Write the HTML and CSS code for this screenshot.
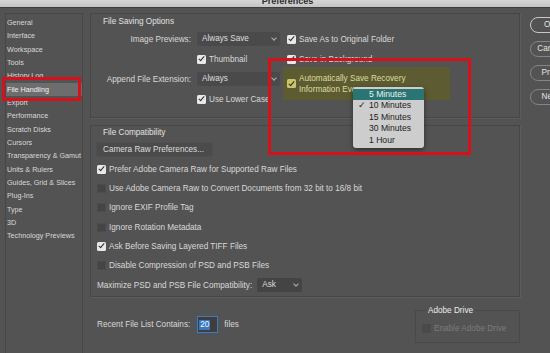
FILE: index.html
```html
<!DOCTYPE html>
<html lang="en">
<head>
    <meta charset="UTF-8">
    <title>Preferences</title>
    <link rel="stylesheet" href="styles.css">
</head>
<body>
<div class="titlebar"><span>Preferences</span></div>

<div class="window">
    <ul class="sidebar">
        <li>General</li>
        <li>Interface</li>
        <li>Workspace</li>
        <li>Tools</li>
        <li>History Log</li>
        <li class="active">File Handling</li>
        <li>Export</li>
        <li>Performance</li>
        <li>Scratch Disks</li>
        <li>Cursors</li>
        <li>Transparency &amp; Gamut</li>
        <li>Units &amp; Rulers</li>
        <li>Guides, Grid &amp; Slices</li>
        <li>Plug-Ins</li>
        <li>Type</li>
        <li>3D</li>
        <li>Technology Previews</li>
    </ul>

    <div class="content">
        <div class="group saving">
            <p class="group-title">File Saving Options</p>
            <div class="saving-grid">
                <span class="label">Image Previews:</span>
                <div class="select wide">Always Save<i class="chev"></i></div>
                <label class="check-row side"><span class="box on"></span>Save As to Original Folder</label>

                <span></span>
                <label class="check-row"><span class="box on"></span>Thumbnail</label>
                <label class="check-row side"><span class="box on"></span>Save in Background</label>

                <span class="label">Append File Extension:</span>
                <div class="select wide">Always<i class="chev"></i></div>
                <div class="olive">
                    <span class="box olive-box"></span>
                    <span>Automatically Save Recovery<br>Information Every:</span>
                </div>

                <span></span>
                <label class="check-row"><span class="box on"></span>Use Lower Case</label>
            </div>
        </div>

        <div class="group compat">
            <p class="group-title">File Compatibility</p>
            <div class="row"><span class="btn">Camera Raw Preferences...</span></div>
            <label class="row check-row"><span class="box on"></span>Prefer Adobe Camera Raw for Supported Raw Files</label>
            <label class="row check-row"><span class="box"></span>Use Adobe Camera Raw to Convert Documents from 32 bit to 16/8 bit</label>
            <label class="row check-row"><span class="box"></span>Ignore EXIF Profile Tag</label>
            <label class="row check-row"><span class="box"></span>Ignore Rotation Metadata</label>
            <label class="row check-row"><span class="box on"></span>Ask Before Saving Layered TIFF Files</label>
            <label class="row check-row"><span class="box"></span>Disable Compression of PSD and PSB Files</label>
            <div class="row">
                Maximize PSD and PSB File Compatibility:
                <div class="select small">Ask<i class="chev"></i></div>
            </div>
        </div>

        <div class="footer">
            <div class="recent">
                Recent File List Contains:
                <span class="num"><span class="sel">20</span></span>
                <span class="files">files</span>
            </div>
            <fieldset class="drive">
                <legend>Adobe Drive</legend>
                <span class="box dim"></span>Enable Adobe Drive
            </fieldset>
        </div>
    </div>

    <div class="buttons">
        <span class="pill default">OK</span>
        <span class="pill">Cancel</span>
        <span class="pill">Prev</span>
        <span class="pill">Next</span>
    </div>
</div>

<ul class="menu">
    <li class="hl">5 Minutes</li>
    <li class="ticked">10 Minutes</li>
    <li>15 Minutes</li>
    <li>30 Minutes</li>
    <li>1 Hour</li>
</ul>

<div class="mark mark-side"></div>
<div class="mark mark-main"></div>
</body>
</html>
```

FILE: styles.css
```css
html, body, ul, p {
    margin: 0;
    padding: 0;
}
body {
    width: 550px;
    height: 353px;
    overflow: hidden;
    position: relative;
    background: #535353;
    color: #d9d9d9;
    font-family: "Liberation Sans", Arial, sans-serif;
    font-size: 8.2px;
}
li {
    list-style: none;
}

.titlebar {
    height: 8px;
    overflow: hidden;
    background: linear-gradient(#d6d6d6, #c4c4c4);
    border-bottom: 1px solid #3c3c3c;
    box-sizing: border-box;
    text-align: center;
    padding-left: 25px;
    line-height: 3px;
    font-size: 9px;
    font-weight: bold;
    color: #2c2c2c;
}

.window {
    display: flex;
    height: 345px;
    padding-top: 5px;
    box-sizing: border-box;
}

/* left list */
.sidebar {
    margin-left: 5px;
    width: 78px;
    flex: none;
    border: 1px solid #474747;
    border-bottom: none;
    padding-top: 2px;
    box-sizing: border-box;
    font-size: 7.2px;
}
.sidebar li {
    height: 13.33px;
    line-height: 13.33px;
    padding-left: 1px;
    white-space: nowrap;
}
.sidebar .active {
    background: #6d6d6d;
    color: #f2f2f2;
}

.content {
    margin-left: 7px;
    width: 430px;
    flex: none;
}
.group {
    border: 1px solid #474747;
    box-shadow: 1px 1px 0 #5d5d5d;
    box-sizing: border-box;
}
.group-title {
    padding-left: 12px;
    color: #e2e2e2;
}
.saving {
    height: 105px;
}
.saving .group-title {
    line-height: 15px;
}
.saving-grid {
    display: grid;
    grid-template-columns: 106px 86px 1fr;
    grid-auto-rows: 20px;
    align-items: center;
}
.label {
    text-align: right;
    padding-right: 6px;
    white-space: nowrap;
}
.side {
    padding-left: 4px;
}

.select {
    position: relative;
    height: 14px;
    line-height: 14px;
    background: #4a4a4a;
    border-radius: 2px;
    padding-left: 5px;
    box-sizing: border-box;
    color: #dedede;
}
.select.wide {
    width: 83px;
}
.select.small {
    display: inline-block;
    width: 45px;
    margin-left: 5px;
    background: #444;
}
.chev {
    position: absolute;
    right: 4px;
    top: 4px;
    width: 3px;
    height: 3px;
    border-right: 1px solid #b0b0b0;
    border-bottom: 1px solid #b0b0b0;
    transform: rotate(45deg);
}

.check-row {
    display: flex;
    align-items: center;
    white-space: nowrap;
}
.box {
    width: 9px;
    height: 9px;
    flex: none;
    margin-right: 3px;
    border-radius: 1.5px;
    background: #454545;
    box-shadow: inset 0 0 0 1px #4c4c4c;
    position: relative;
}
.box.on {
    background: #e8e8e8;
    box-shadow: none;
}
.box.on::after, .olive-box::after {
    content: "";
    position: absolute;
    left: 3px;
    top: 0.5px;
    width: 2px;
    height: 5px;
    border-right: 1.5px solid #2a2a2a;
    border-bottom: 1.5px solid #2a2a2a;
    transform: rotate(40deg);
}

.olive {
    grid-row: 3 / span 2;
    grid-column: 3;
    align-self: start;
    margin-top: -2px;
    width: 167px;
    height: 33px;
    padding-left: 4px;
    box-sizing: border-box;
    background: #5c5b31;
    color: #dedba0;
    display: flex;
    align-items: center;
    line-height: 11px;
    white-space: nowrap;
}
.olive-box {
    background: #c9c66a;
    box-shadow: none;
}

.compat {
    margin-top: 7px;
    height: 172px;
    padding: 0 6px;
}
.compat .group-title {
    line-height: 14.3px;
    padding-left: 6px;
}
.row {
    height: 19.3px;
    display: flex;
    align-items: center;
    white-space: nowrap;
}
.btn {
    width: 115px;
    height: 13px;
    line-height: 13px;
    padding-left: 6px;
    box-sizing: border-box;
    background: #4b4b4b;
    box-shadow: 0 0 0 1px #4f4f4f;
    border-radius: 2px;
    color: #dedede;
}

.footer {
    display: flex;
    justify-content: space-between;
    align-items: center;
    margin-top: 9px;
}
.recent {
    padding-left: 7px;
    display: flex;
    align-items: center;
}
.num {
    width: 19px;
    height: 15px;
    margin-left: 8px;
    box-sizing: border-box;
    background: #3e3e3e;
    box-shadow: 0 0 0 1px #4b78a8, 0 0 3px 1px #365d86;
    display: flex;
    align-items: center;
    padding-left: 1px;
}
.sel {
    background: #3a78c0;
    color: #f4f8ff;
    padding: 0 1px;
    line-height: 10px;
}
.files {
    margin-left: 7px;
}
.drive {
    margin: 0;
    width: 105px;
    height: 37px;
    box-sizing: border-box;
    border: 1px solid #494949;
    padding: 0 0 0 6px;
    display: flex;
    align-items: center;
    color: #7b7b7b;
}
.drive legend {
    margin-left: 4px;
    padding: 0 2px;
    color: #ececec;
    line-height: 9px;
}
.box.dim {
    background: #4a4a4a;
    box-shadow: none;
}

.buttons {
    margin-left: 10px;
    padding-top: 4px;
    display: flex;
    flex-direction: column;
    gap: 8px;
}
.pill {
    width: 40px;
    height: 16px;
    line-height: 14px;
    box-sizing: border-box;
    border: 1px solid #858585;
    border-radius: 8px;
    text-align: center;
    color: #e4e4e4;
}
.pill.default {
    border-color: #c8c8c8;
}

/* popup list over the olive row */
.menu {
    position: absolute;
    left: 353px;
    top: 87px;
    width: 71px;
    height: 61px;
    box-sizing: border-box;
    background: #cdcdcd;
    border-radius: 3px;
    box-shadow: 0 2px 5px rgba(0, 0, 0, 0.45);
    padding-top: 1.5px;
    color: #1c1c1c;
    font-size: 8.6px;
}
.menu li {
    height: 11.6px;
    line-height: 11.6px;
    padding-left: 16px;
    position: relative;
}
.menu .hl {
    background: #287573;
    color: #e8f2ee;
}
.menu .ticked::before {
    content: "\2713";
    position: absolute;
    left: 5px;
}

/* red annotation frames */
.mark {
    position: absolute;
    border: 3px solid #d5121c;
    box-sizing: border-box;
}
.mark-side {
    left: 2px;
    top: 77px;
    width: 79px;
    height: 24px;
}
.mark-main {
    left: 268px;
    top: 58px;
    width: 203px;
    height: 97px;
}
```
